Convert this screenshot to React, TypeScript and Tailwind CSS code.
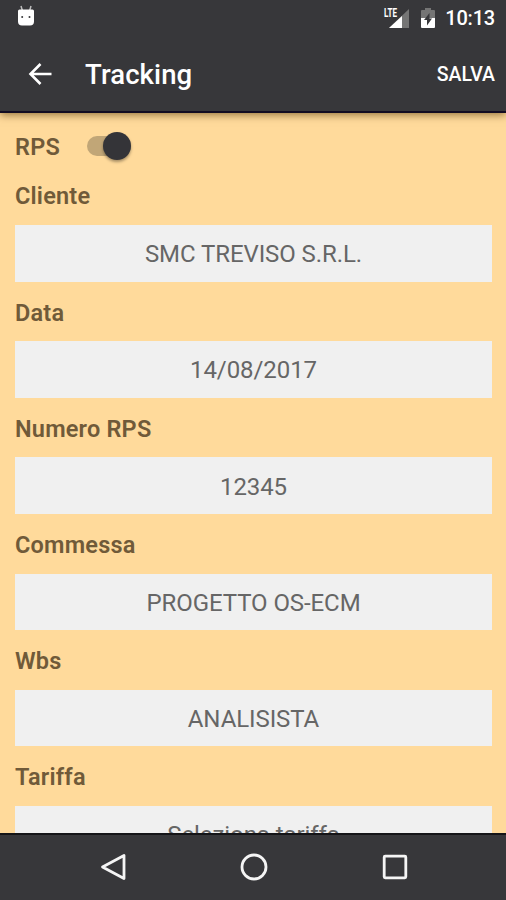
const fields = [
  { label: "Cliente", value: "SMC TREVISO S.R.L." },
  { label: "Data", value: "14/08/2017" },
  { label: "Numero RPS", value: "12345" },
  { label: "Commessa", value: "PROGETTO OS-ECM" },
  { label: "Wbs", value: "ANALISISTA" },
  { label: "Tariffa", value: "Seleziona tariffa" },
];

function StatusBar() {
  return (
    <div className="flex h-9 items-center justify-between pl-[17px] pr-[11px]">
      <svg width="18" height="22" viewBox="0 0 18 22" className="-mt-1">
        <path d="M4 1l1.500 5M14 1l-1.500 5" stroke="#bdbdbd" strokeWidth="1.500" />
        <path
          d="M2.500 4.500h13A1.500 1.500 0 0 1 17 6v10.500a4 4 0 0 1-4 4H5a4 4 0 0 1-4-4V6A1.500 1.500 0 0 1 2.500 4.500z"
          fill="#fff"
        />
        <circle cx="5.200" cy="12" r="1" fill="#37373a" />
        <circle cx="12.500" cy="12" r="1" fill="#37373a" />
      </svg>
      <div className="flex items-center">
        <svg width="26" height="22" viewBox="0 0 26 22" className="-mt-px overflow-visible">
          <path d="M26 2v19H6z" fill="#757575" />
          <path d="M19 9v12H6z" fill="#fff" />
          <text
            x="1"
            y="10"
            fill="#fff"
            fontSize="12"
            fontWeight="700"
            textLength="13"
            lengthAdjust="spacingAndGlyphs"
          >
            LTE
          </text>
        </svg>
        <svg width="14" height="22" viewBox="0 0 14 22" className="ml-[12px] -mt-px">
          <path d="M4 1h6v2h3q1 0 1 1v7H0V4q0-1 1-1h3z" fill="#757575" />
          <path d="M0 11h14v9q0 1-1 1H1q-1 0-1-1z" fill="#fff" />
          <path d="M8.500 6v5.500h2.500l-5 7v-5.500H3z" fill="#37373a" />
        </svg>
        <span className="ml-[10px] text-[20px] font-medium leading-none tracking-[-0.2px]">
          10:13
        </span>
      </div>
    </div>
  );
}

function Toolbar() {
  return (
    <div className="flex h-[77px] items-center border-b-2 border-[#120c22] pl-7 pr-[11px] pt-px">
      <svg
        width="24"
        height="24"
        viewBox="0 0 24 24"
        fill="none"
        stroke="#fff"
        strokeWidth="2.600"
      >
        <path d="M23.500 12H2.500M12.500 2l-10 10 10 10" />
      </svg>
      <h1 className="ml-[33px] pt-px text-[27.500px] font-medium leading-none tracking-[0.100px]">
        Tracking
      </h1>
      <button className="ml-auto pt-[2px] text-[19.500px] font-medium leading-none">
        SALVA
      </button>
    </div>
  );
}

function Switch() {
  return (
    <div className="flex h-5 w-[44px] items-center justify-end rounded-full bg-[#c1a677]">
      <div className="size-7 shrink-0 rounded-full bg-[#343438] shadow-[0_2px_3px_rgba(0,0,0,0.35)]" />
    </div>
  );
}

function NavBar() {
  return (
    <div className="flex h-[67px] shrink-0 items-center justify-center gap-[113px] border-t-2 border-[#151518] bg-[#37373a] pb-[2px] pl-px">
      <svg width="28" height="28" viewBox="0 0 28 28" fill="none" stroke="#f5f5f5" strokeWidth="2.800">
        <path d="M25 2.500v23L3.500 14z" strokeLinejoin="round" />
      </svg>
      <svg width="28" height="28" viewBox="0 0 28 28" fill="none" stroke="#f5f5f5" strokeWidth="2.800">
        <circle cx="14" cy="14" r="12" />
      </svg>
      <svg width="28" height="28" viewBox="0 0 28 28" fill="none" stroke="#f5f5f5" strokeWidth="2.800">
        <rect x="3.200" y="3.200" width="21.600" height="21.600" rx="1" />
      </svg>
    </div>
  );
}

export default function App() {
  return (
    <div className="flex h-[900px] w-[506px] flex-col overflow-hidden bg-[#ffda9b] font-[Roboto,sans-serif]">
      <header className="z-10 shrink-0 bg-[#37373a] text-white shadow-[0_2px_8px_rgba(80,50,0,0.6)]">
        <StatusBar />
        <Toolbar />
      </header>

      <main className="min-h-0 flex-1 overflow-hidden pl-[15px] pr-[14px] pt-[17px]">
        <div className="flex h-8 items-center">
          <span className="w-[72px] pt-[3px] text-[23.500px] font-semibold tracking-[0.200px] text-[#705a39]">
            RPS
          </span>
          <Switch />
        </div>
        <div className="pt-[3px]">
          {fields.map((field) => (
            <div key={field.label} className="h-[116.200px]">
              <div className="flex h-[60px] items-center pt-[4px] text-[23.500px] font-semibold tracking-[0.200px] text-[#705a39]">
                {field.label}
              </div>
              <div className="flex h-[56.500px] items-center justify-center bg-[#f0f0f0] pt-[2px] text-[24px] tracking-[-0.080px] text-[#666]">
                {field.value}
              </div>
            </div>
          ))}
        </div>
      </main>

      <NavBar />
    </div>
  );
}
